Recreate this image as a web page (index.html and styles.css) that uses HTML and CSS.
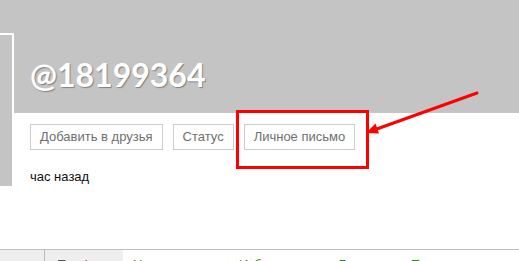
FILE: index.html
```html
<!DOCTYPE html>
<html lang="ru">
<head>
  <meta charset="UTF-8" />
  <title>@18199364</title>
  <link rel="stylesheet" href="styles.css">
</head>
<body>
  <div class="page">
    <div class="cover">
      <div class="avatar"></div>
      <h1 class="nick">@18199364</h1>
    </div>
    <div class="actions">
      <button class="btn">Добавить в друзья</button>
      <button class="btn">Статус</button>
      <button class="btn">Личное письмо</button>
    </div>
    <div class="seen">час назад</div>
    <div class="tabs">
      <div class="tab tab-blank"></div>
      <div class="tab tab-active">Профиль</div>
      <div class="links">
        <span class="link l1">Новости</span>
        <span class="link l2">Избранное</span>
        <span class="link l3">Группы</span>
        <span class="link l4">Темы</span>
      </div>
    </div>

    <!-- annotation over the screenshot -->
    <div class="mark"></div>
    <svg class="arrow" width="519" height="261" viewBox="0 0 519 261">
      <line x1="477" y1="93" x2="374" y2="130" stroke="#ff0000" stroke-width="3" stroke-linecap="round" />
      <polygon points="366,133 379,133.5 375.5,123.5" fill="#ff0000" />
    </svg>
  </div>
</body>
</html>
```

FILE: styles.css
```css
html, body {
  margin: 0;
  padding: 0;
  background: #fff;
  overflow: hidden;
  font-family: "Liberation Sans", Arial, sans-serif;
}
.page {
  position: relative;
  width: 519px;
  height: 261px;
  overflow: hidden;
}
.cover {
  position: relative;
  height: 113px;
  background: #c4c4c4;
  padding: 56px 0 0 30px;
  box-sizing: border-box;
}
.avatar {
  position: absolute;
  left: -40px;
  top: 33px;
  width: 52px;
  height: 151px;
  background: #c4c4c4;
  border-top: 2px solid #fff;
  border-right: 2px solid #fff;
}
.nick {
  margin: 0;
  font-family: Lato, "Open Sans", sans-serif;
  font-weight: bold;
  font-size: 32px;
  line-height: 38px;
  color: #fff;
  text-shadow: 1px 1px 1px rgba(0, 0, 0, 0.35);
}
.actions {
  display: flex;
  gap: 10px;
  padding: 11px 0 0 30px;
}
.btn {
  font-family: "Liberation Sans", Arial, sans-serif;
  font-size: 13px;
  line-height: 24px;
  height: 26px;
  padding: 0 9px;
  margin: 0;
  border: 1px solid #cccccc;
  background: #fff;
  color: #6f6f6f;
  border-radius: 0;
}
.seen {
  padding: 19px 0 0 30px;
  font-size: 13px;
  line-height: 15px;
  color: #111;
}
.tabs {
  display: flex;
  margin-top: 65px;
  border-top: 1px solid #c0c0c0;
  height: 20px;
}
.tab {
  background: #eeeeee;
  height: 20px;
}
.tab-blank {
  width: 44px;
  border-right: 1px solid #bbbbbb;
}
.tab-active {
  width: 78px;
  padding: 7px 0 0 12px;
  box-sizing: border-box;
  font-size: 13px;
  color: #555;
}
.links {
  padding-top: 7px;
  font-size: 13px;
  color: #2a8a2a;
}
.link {
  display: inline-block;
}
.l1 { margin-left: 10px; }
.l2 { margin-left: 52px; }
.l3 { margin-left: 30px; }
.l4 { margin-left: 26px; }
.mark {
  position: absolute;
  left: 236px;
  top: 110px;
  width: 127px;
  height: 53px;
  border: 3px solid #ff0000;
}
.arrow {
  position: absolute;
  left: 0;
  top: 0;
}
```
